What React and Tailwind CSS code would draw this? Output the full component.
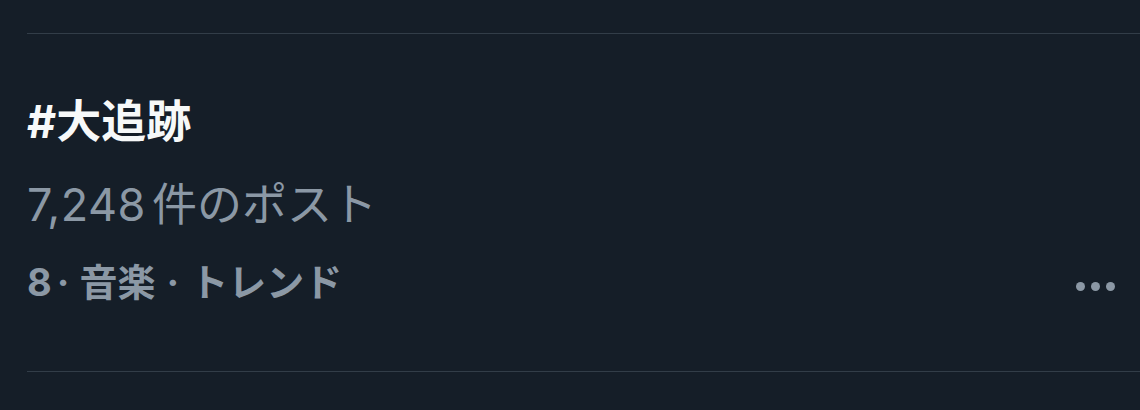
export default function App() {
  return (
    <div
      className="w-[1140px] h-[410px] bg-[#151e28] overflow-hidden pt-[33px] pl-[27px]"
      style={{ fontFamily: 'Inter, "Noto Sans CJK JP", sans-serif' }}
    >
      {/* Trend row */}
      <div className="border-t border-b border-[#323d48] pt-[66px] pb-[70px] pr-[25px]">
        <div className="text-[45px] leading-[44px] font-bold text-[#f7f9f9]">#大追跡</div>
        <div className="mt-[38px] text-[45px] leading-[46px] text-[#8b98a5]">
          <span className="tracking-[0.5px]">7,248</span>
          <span className="ml-[6px]">件のポスト</span>
        </div>
        <div className="mt-[36px] flex items-center justify-between">
          <div className="flex items-baseline text-[38px] leading-[37px] font-bold text-[#8b98a5]">
            <span>8</span>
            <span className="ml-[5px]">·</span>
            <span className="ml-[10px]">音楽</span>
            <span className="ml-[11px]">·</span>
            <span className="ml-[11px]">トレンド</span>
          </div>
          <div className="flex gap-[6px] mt-[7px]">
            <span className="w-[9px] h-[9px] rounded-full bg-[#8b98a5]" />
            <span className="w-[9px] h-[9px] rounded-full bg-[#8b98a5]" />
            <span className="w-[9px] h-[9px] rounded-full bg-[#8b98a5]" />
          </div>
        </div>
      </div>
    </div>
  );
}
